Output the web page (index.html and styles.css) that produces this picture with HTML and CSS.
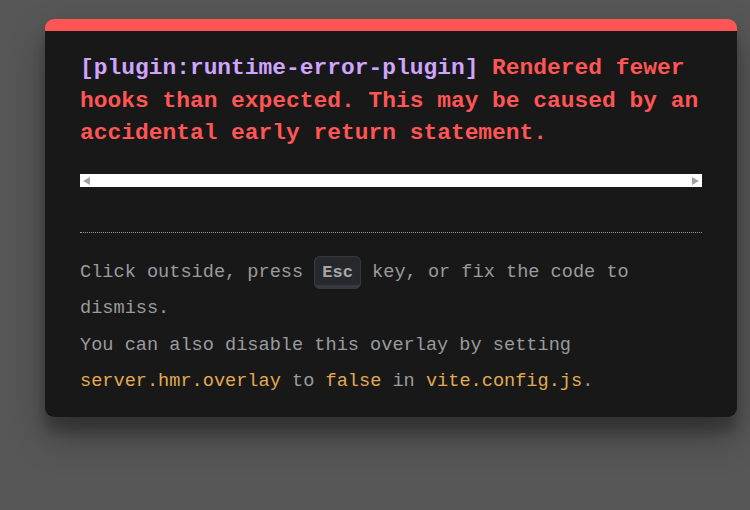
FILE: index.html
```html
<!DOCTYPE html>
<html>
<head>
<meta charset="utf-8">
<link rel="stylesheet" href="styles.css">
</head>
<body>
<div class="backdrop">
  <div class="window">
    <pre class="message"><span class="plugin">[plugin:runtime-error-plugin] </span><span class="message-body">Rendered fewer<br>hooks than expected. This may be caused by an<br>accidental early return statement.</span></pre>
    <div class="scrollbar">
      <span class="arrow arrow-left"></span>
      <span class="arrow arrow-right"></span>
    </div>
    <div class="tip">
      <div>Click outside, press <kbd>Esc</kbd> key, or fix the code to<br>dismiss.</div>
      <div>You can also disable this overlay by setting<br><code>server.hmr.overlay</code> to <code>false</code> in <code>vite.config.js</code>.</div>
    </div>
  </div>
</div>
</body>
</html>
```

FILE: styles.css
```css
html, body {
  margin: 0;
  padding: 0;
}
body {
  background: #575757;
  width: 750px;
  height: 510px;
  overflow: hidden;
}
.backdrop {
  padding: 19px 13px 0 45px;
}
.window {
  box-sizing: border-box;
  width: 692px;
  background: #181818;
  border-top: 12px solid #ff5555;
  border-radius: 9px;
  padding: 21px 35px 16px 35px;
  box-shadow: 0 19px 38px rgba(0, 0, 0, 0.30), 0 15px 12px rgba(0, 0, 0, 0.22);
  font-family: "Liberation Mono", "DejaVu Sans Mono", monospace;
}
.message {
  margin: 0;
  font-family: "Liberation Mono", "DejaVu Sans Mono", monospace;
  font-size: 22.9px;
  line-height: 32.5px;
  font-weight: 700;
  white-space: pre;
}
.plugin {
  color: #cfa4ff;
}
.message-body {
  color: #ff5555;
}
.scrollbar {
  position: relative;
  margin-top: 24px;
  height: 13px;
  background: #ffffff;
}
.arrow {
  position: absolute;
  top: 3px;
  width: 0;
  height: 0;
  border-top: 4px solid transparent;
  border-bottom: 4px solid transparent;
}
.arrow-left {
  left: 3px;
  border-right: 7px solid #a3a3a3;
}
.arrow-right {
  right: 3px;
  border-left: 7px solid #a3a3a3;
}
.tip {
  margin-top: 45px;
  border-top: 1px dotted #999;
  padding-top: 22px;
  font-size: 18.6px;
  line-height: 36.5px;
  color: #9a9b9e;
}
kbd {
  padding: 6px 7px 3.5px 7px;
  font-family: "Liberation Mono", "DejaVu Sans Mono", monospace;
  font-size: 17px;
  font-weight: 700;
  background: #26282c;
  color: #a6a7ab;
  border-style: solid;
  border-color: #363940;
  border-width: 1.5px 1.5px 4.5px 1.5px;
  border-radius: 6px;
}
code {
  font-family: "Liberation Mono", "DejaVu Sans Mono", monospace;
  color: #e2aa53;
}
```
